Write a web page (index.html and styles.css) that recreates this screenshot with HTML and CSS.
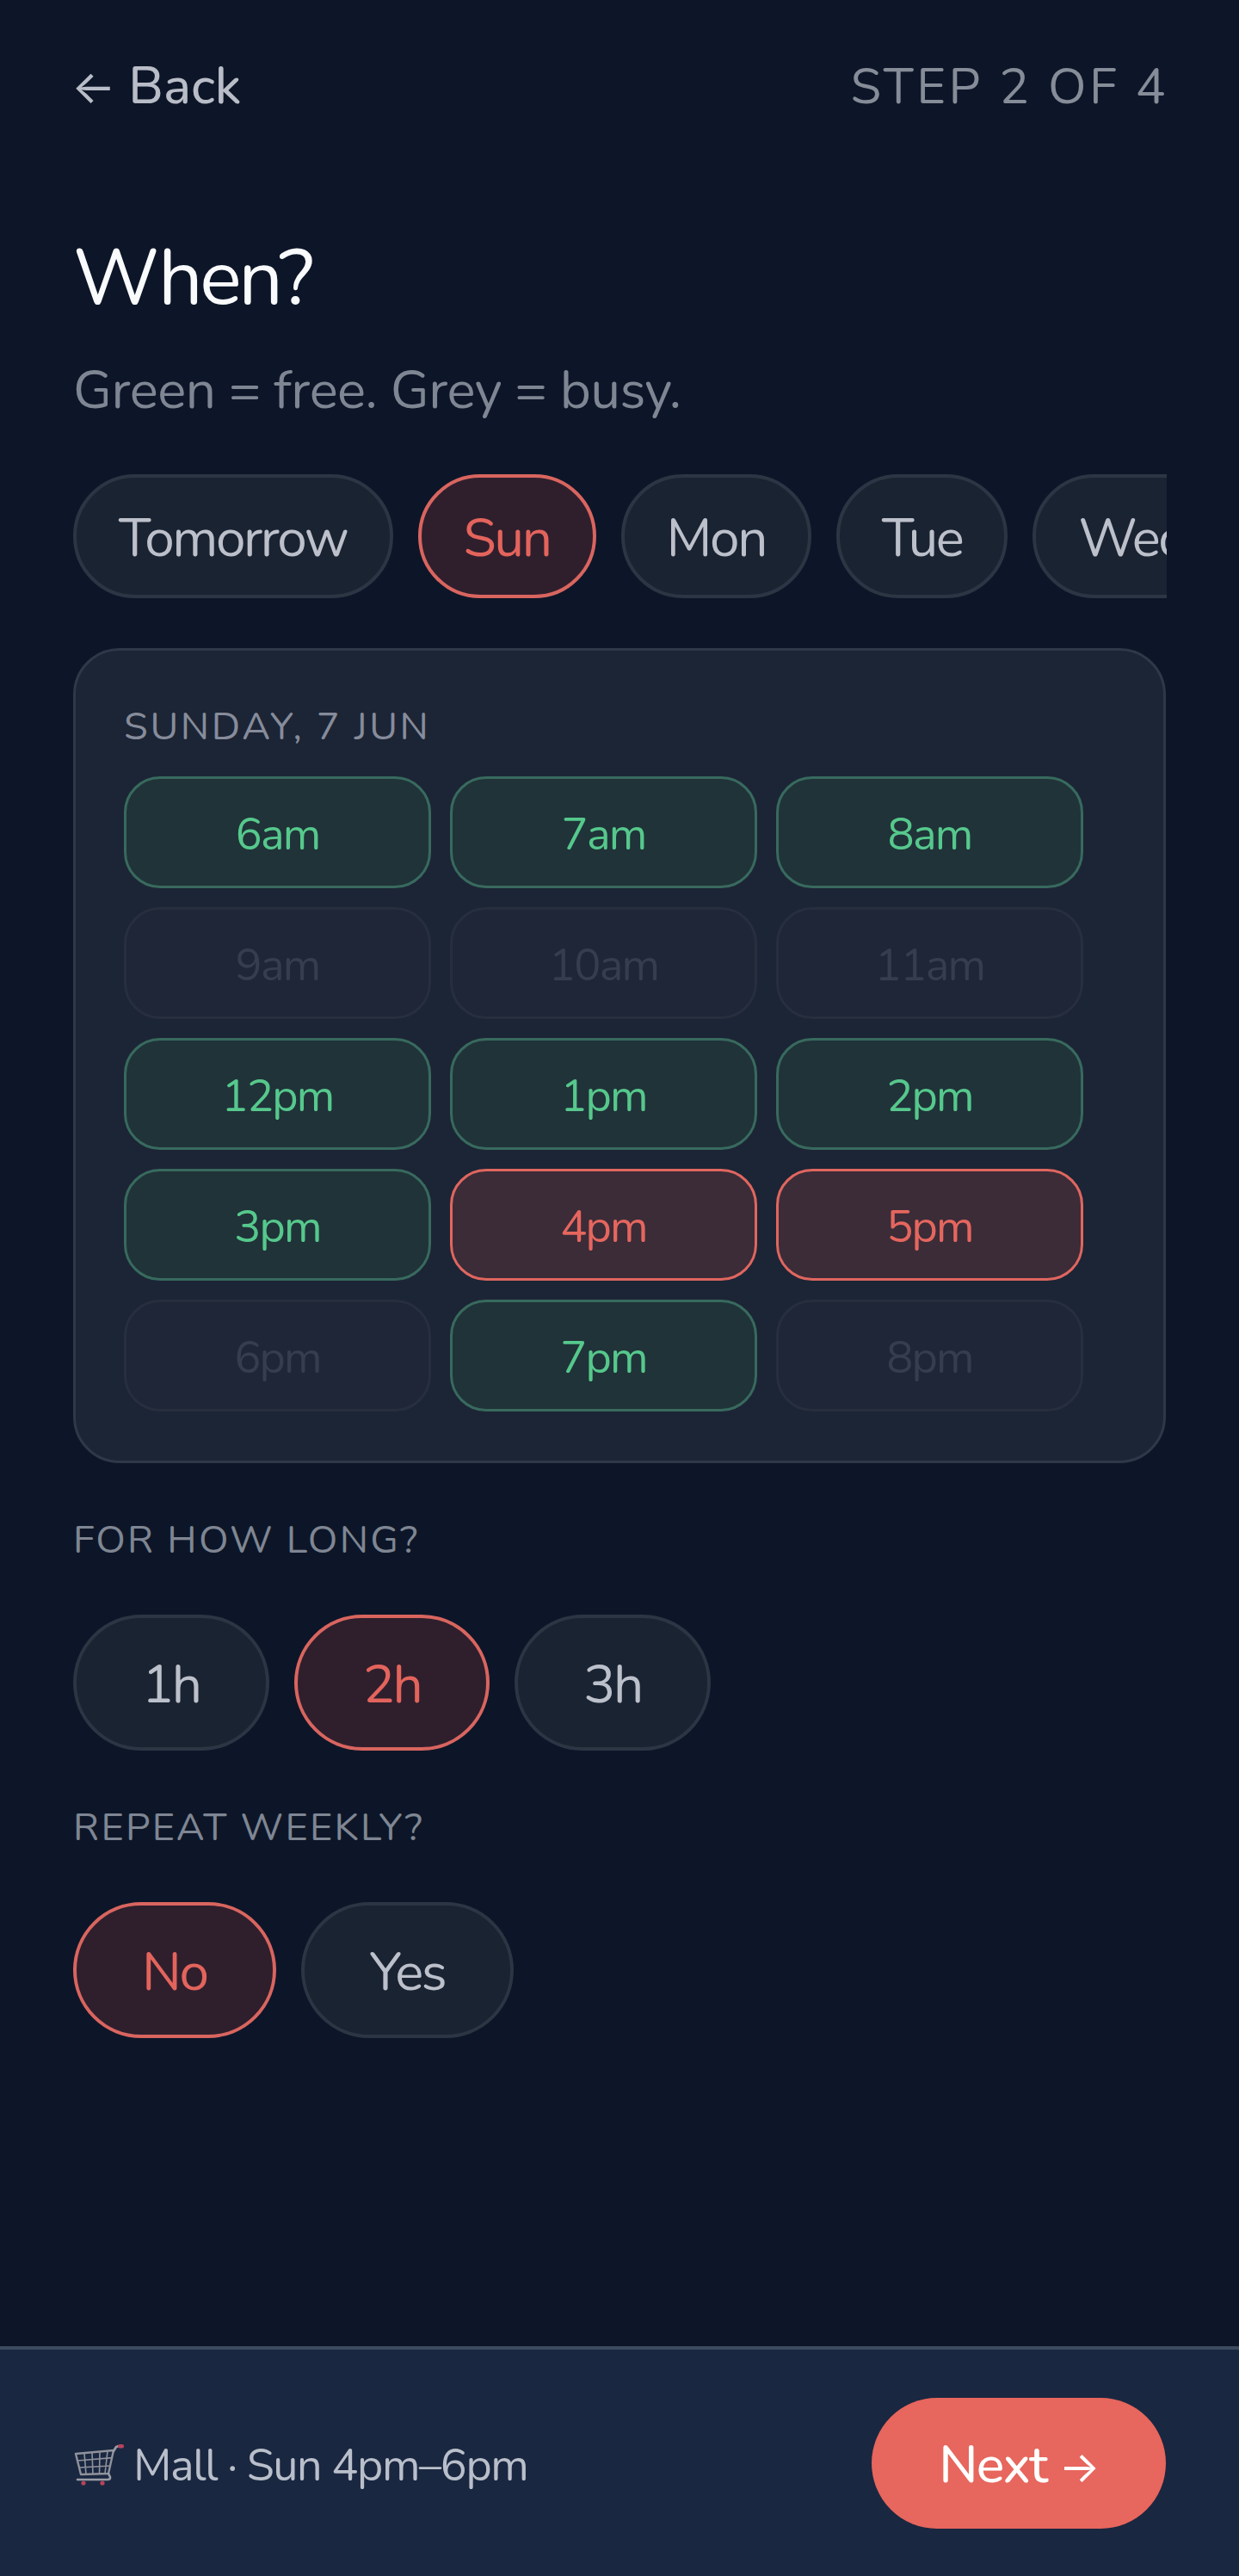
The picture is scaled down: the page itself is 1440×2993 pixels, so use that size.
FILE: index.html
```html
<!DOCTYPE html>
<html lang="en">
<head>
<meta charset="utf-8">
<title>When?</title>
<link rel="stylesheet" href="styles.css">
</head>
<body>
<div class="screen">
  <main class="content">
    <header class="topbar">
      <span class="back"><span class="arrow">←</span> Back</span>
      <span class="step">STEP 2 OF 4</span>
    </header>
    <h1 class="title">When?</h1>
    <p class="subtitle">Green = free. Grey = busy.</p>
    <div class="days">
      <span class="pill day">Tomorrow</span>
      <span class="pill day active">Sun</span>
      <span class="pill day">Mon</span>
      <span class="pill day">Tue</span>
      <span class="pill day">Wed</span>
    </div>
    <section class="card">
      <div class="card-label">SUNDAY, 7 JUN</div>
      <div class="slots">
        <span class="slot free">6am</span><span class="slot free">7am</span><span class="slot free">8am</span>
        <span class="slot busy">9am</span><span class="slot busy">10am</span><span class="slot busy">11am</span>
        <span class="slot free">12pm</span><span class="slot free">1pm</span><span class="slot free">2pm</span>
        <span class="slot free">3pm</span><span class="slot picked">4pm</span><span class="slot picked">5pm</span>
        <span class="slot busy">6pm</span><span class="slot free">7pm</span><span class="slot busy">8pm</span>
      </div>
    </section>
    <div class="section-label">FOR HOW LONG?</div>
    <div class="options">
      <span class="pill option">1h</span>
      <span class="pill option active">2h</span>
      <span class="pill option">3h</span>
    </div>
    <div class="section-label">REPEAT WEEKLY?</div>
    <div class="options">
      <span class="pill option active">No</span>
      <span class="pill option">Yes</span>
    </div>
  </main>
  <footer class="bottombar">
    <div class="summary">
      <svg class="cart" viewBox="0 0 60 48" aria-hidden="true">
        <path d="M3 11 L47 7 L41 34 L9 35 Z" fill="none" stroke="#8f929c" stroke-width="2.4" stroke-linejoin="round"/>
        <path d="M4.600 19 L45.400 15.600 M6.400 27 L43.400 25 M13 10.500 L15 35 M22 9.800 L23 35 M31 9 L30.500 34.500 M40 8 L37 34" fill="none" stroke="#8f929c" stroke-width="1.6"/>
        <path d="M47 8 L50 3 L53 2 M41 34 L43 38 Q43.500 41 40 41 L5 41" fill="none" stroke="#9a9da6" stroke-width="2.6" stroke-linecap="round" stroke-linejoin="round"/>
        <rect x="52" y="0" width="7" height="4.500" rx="2" fill="#b8435c"/>
        <circle cx="12" cy="45" r="2.600" fill="#b8435c"/>
        <circle cx="34" cy="45" r="2.600" fill="#b8435c"/>
      </svg>
      <span>Mall · Sun 4pm–6pm</span>
    </div>
    <button class="next" type="button">Next <span class="arrow">→</span></button>
  </footer>
</div>
</body>
</html>
```
FILE: styles.css
```css
* { box-sizing: border-box; }
html, body { margin: 0; padding: 0; }
body {
  background: #0d1628;
  font-family: "Nunito", "Noto Sans", sans-serif;
  color: #fff;
}
.screen { min-height: 2993px; display: flex; flex-direction: column; }
.content { flex: 1; padding: 65px 85px 0; }
.topbar { display: flex; justify-content: space-between; align-items: center; height: 70px; }
.back { font-size: 60px; font-weight: 500; color: #b9bdc7; margin-left: -2px; }
.arrow { font-family: "Inter", sans-serif; font-weight: 400; font-size: 50px; }
.back .arrow { font-size: 54px; letter-spacing: -1px; }
.step { font-size: 58px; letter-spacing: 3.5px; margin-right: -3px; color: #868c98; }
.title { margin: 133px 0 0; height: 110px; line-height: 110px; font-size: 91px; font-weight: 400; letter-spacing: -3.4px; color: #f9fafc; }
.subtitle { margin: 36px 0 0; height: 80px; line-height: 80px; font-size: 62px; letter-spacing: -0.5px; color: #7f8693; }
.days { display: flex; gap: 29px; margin-top: 57px; width: 1271px; overflow: hidden; }
.pill {
  flex: none; display: flex; align-items: center; justify-content: center;
  background: #1a2332; border: 4px solid #2c3543; border-radius: 80px; color: #bcc0ca;
  font-size: 62px; letter-spacing: -2.4px;
}
.pill.active { background: #2f1f2d; border-color: #d9655f; color: #e3645c; }
.day { height: 144px; padding: 4px 49px 0; }
.card {
  margin-top: 58px; height: 947px; padding: 57px 56px 0;
  background: #1c2535; border: 3px solid #2f3848; border-radius: 54px;
}
.card-label { height: 72px; line-height: 64px; font-size: 45px; letter-spacing: 2.7px; color: #868c9b; }
.slots { display: grid; grid-template-columns: repeat(3, 357px); grid-auto-rows: 130px; gap: 22px; margin-top: 17px; }
.slot {
  display: flex; align-items: center; justify-content: center; padding-top: 5px;
  font-size: 52px; letter-spacing: -1.8px; border: 3px solid; border-radius: 42px;
}
.free { background: #203339; border-color: #386a5e; color: #56c88c; }
.busy { background: #1e2637; border-color: #272f3f; color: #353d4e; }
.picked { background: #3b2c38; border-color: #e0665f; color: #e5665e; }
.section-label { margin-top: 60px; height: 60px; line-height: 60px; font-size: 45px; letter-spacing: 2.3px; color: #7f8693; }
.options { display: flex; gap: 29px; margin-top: 56px; }
.option { height: 158px; padding: 4px 76px 0; }
.bottombar {
  height: 267px; display: flex; align-items: center; justify-content: space-between;
  padding: 0 85px; background: #1a2740; border-top: 4px solid #3c4a5f;
}
.summary { display: flex; align-items: center; gap: 10px; padding-top: 5px; font-size: 52px; letter-spacing: -1.4px; color: #b9bfca; }
.cart { width: 60px; height: 48px; }
.next {
  width: 342px; height: 152px; border: 0; border-radius: 76px; padding: 4px 0 0;
  background: #e7665d; color: #fff; font-family: inherit; font-size: 61px; font-weight: 500; letter-spacing: -1.6px;
}
```
